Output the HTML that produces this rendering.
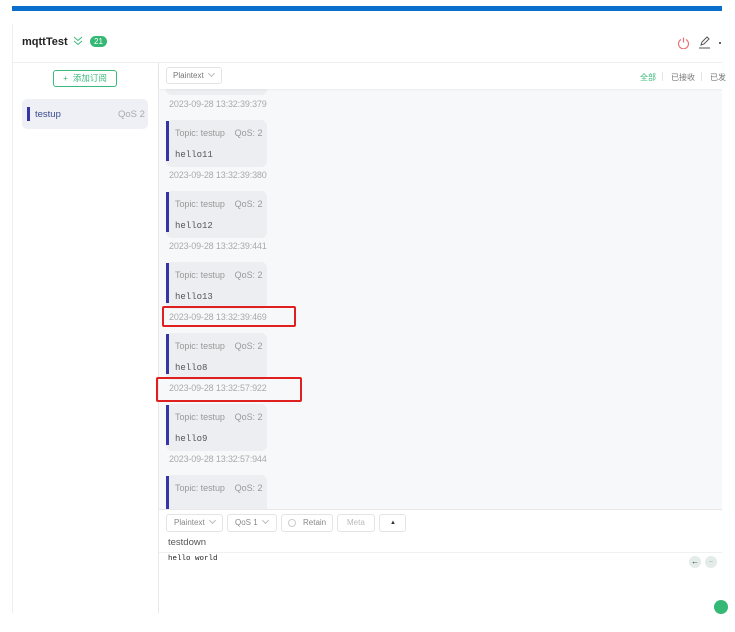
<!DOCTYPE html>
<html><head><meta charset="utf-8"><style>
*{margin:0;padding:0;box-sizing:border-box}
body{width:735px;height:632px;background:#fff;font-family:"Liberation Sans","Noto Sans CJK SC",sans-serif;position:relative;overflow:hidden}
.a{position:absolute}
.card{position:absolute;left:166px;width:101px;height:47px;background:#eceef2;border-radius:6px}
.card .bar{position:absolute;left:0;top:1px;width:3px;height:40px;background:#3535a8}
.card .t{position:absolute;left:9px;top:8px;font-size:9px;color:#999;white-space:nowrap;letter-spacing:-0.05px}
.card .m{position:absolute;left:9px;top:30px;font-size:9px;color:#555;font-family:"Liberation Mono",monospace}
.ts{position:absolute;left:169px;font-size:9px;color:#aaa;white-space:nowrap;letter-spacing:-0.15px}
.btn{position:absolute;top:514px;height:18px;border:1px solid #e4e4e4;border-radius:3px;font-size:8px;color:#888;line-height:16px;padding-left:7px;background:#fff;white-space:nowrap}
.red{position:absolute;border:2px solid #e02020;border-radius:2px}
.chev{display:inline-block;width:5px;height:5px;border-right:1px solid #bbb;border-bottom:1px solid #bbb;transform:rotate(45deg);margin-left:5px;position:relative;top:-2px}
</style></head><body>
<div class="a" style="left:12px;top:6px;width:710px;height:5px;background:#0a6fcc"></div>
<div class="a" style="left:12px;top:24px;width:710px;height:589px;border-left:1px solid #eee"></div>
<div class="a" style="left:22px;top:36px;font-size:11px;font-weight:bold;color:#222">mqttTest</div>
<svg class="a" style="left:73px;top:36px" width="10" height="10"><path d="M1 1l4 3.5 4-3.5M1 5l4 3.5 4-3.5" stroke="#3cb97d" fill="none" stroke-width="1"/></svg>
<div class="a" style="left:90px;top:36px;width:17px;height:11px;border-radius:6px;background:#34b875;color:#fff;font-size:8px;text-align:center;line-height:11px">21</div>
<svg class="a" style="left:677px;top:36px" width="13" height="13"><path d="M4 3.5A5 5 0 1 0 9 3.5M6.5 1.5v5" stroke="#e57373" fill="none" stroke-width="1.2"/></svg>
<svg class="a" style="left:698px;top:36px" width="13" height="13"><path d="M3 9l1-3 5-5 2 2-5 5z M1 12h11" stroke="#555" fill="none" stroke-width="1"/></svg>
<div class="a" style="left:719px;top:42px;width:2px;height:2px;background:#333;border-radius:1px"></div>
<div class="a" style="left:12px;top:62px;width:710px;height:1px;background:#eee"></div>
<div class="a" style="left:158px;top:63px;width:1px;height:550px;background:#e8e8e8"></div>
<div class="a" style="left:53px;top:70px;width:64px;height:17px;border:1px solid #3cb97d;border-radius:3px;font-size:8.5px;color:#3cb97d;text-align:center;line-height:15px">+&nbsp; 添加订阅</div>
<div class="a" style="left:22px;top:99px;width:126px;height:30px;background:#eef0f6;border-radius:5px"></div>
<div class="a" style="left:27px;top:107px;width:3px;height:14px;background:#3535a8"></div>
<div class="a" style="left:35px;top:109px;font-size:9.5px;color:#3a4a8a">testup</div>
<div class="a" style="left:118px;top:109px;font-size:9.5px;color:#aaa">QoS 2</div>
<div class="a" style="left:159px;top:63px;width:563px;height:446px;background:#f7f8fa"></div>
<div class="card" style="top:84px;height:11px"></div>
<div class="a" style="left:159px;top:63px;width:563px;height:26px;background:#fff;box-shadow:0 1px 2px rgba(0,0,0,.05)"></div>
<div class="a" style="left:166px;top:67px;width:56px;height:17px;border:1px solid #e4e4e4;border-radius:3px;font-size:8px;color:#777;line-height:15px;padding-left:6px;white-space:nowrap">Plaintext<span class="chev"></span></div>
<div class="a" style="left:640px;top:72px;font-size:8px;color:#3cb97d">全部</div>
<div class="a" style="left:662px;top:72px;width:1px;height:9px;background:#e4e4e4"></div>
<div class="a" style="left:671px;top:72px;font-size:8px;color:#777">已接收</div>
<div class="a" style="left:701px;top:72px;width:1px;height:9px;background:#e4e4e4"></div>
<div class="a" style="left:710px;top:72px;font-size:8px;color:#777">已发</div>
<div class="ts" style="top:99px">2023-09-28 13:32:39:379</div>
<div class="card" style="top:120px"><div class="bar"></div><div class="t">Topic: testup &nbsp;&nbsp; QoS: 2</div><div class="m">hello11</div></div>
<div class="ts" style="top:170px">2023-09-28 13:32:39:380</div>
<div class="card" style="top:191px"><div class="bar"></div><div class="t">Topic: testup &nbsp;&nbsp; QoS: 2</div><div class="m">hello12</div></div>
<div class="ts" style="top:241px">2023-09-28 13:32:39:441</div>
<div class="card" style="top:262px"><div class="bar"></div><div class="t">Topic: testup &nbsp;&nbsp; QoS: 2</div><div class="m">hello13</div></div>
<div class="ts" style="top:312px">2023-09-28 13:32:39:469</div>
<div class="card" style="top:333px"><div class="bar"></div><div class="t">Topic: testup &nbsp;&nbsp; QoS: 2</div><div class="m">hello8</div></div>
<div class="ts" style="top:383px">2023-09-28 13:32:57:922</div>
<div class="card" style="top:404px"><div class="bar"></div><div class="t">Topic: testup &nbsp;&nbsp; QoS: 2</div><div class="m">hello9</div></div>
<div class="ts" style="top:454px">2023-09-28 13:32:57:944</div>
<div class="card" style="top:475px;height:34px;border-radius:6px 6px 0 0"><div class="bar" style="height:33px"></div><div class="t">Topic: testup &nbsp;&nbsp; QoS: 2</div></div>
<div class="red" style="left:162px;top:306px;width:134px;height:21px"></div>
<div class="red" style="left:156px;top:377px;width:146px;height:25px"></div>
<div class="a" style="left:159px;top:509px;width:563px;height:1px;background:#e8e8e8"></div>
<div class="btn" style="left:166px;width:57px">Plaintext<span class="chev"></span></div>
<div class="btn" style="left:227px;width:50px">QoS 1<span class="chev"></span></div>
<div class="btn" style="left:281px;width:52px;padding-left:21px">Retain</div>
<div class="a" style="left:288px;top:519px;width:8px;height:8px;border:1px solid #ccc;border-radius:50%"></div>
<div class="btn" style="left:337px;width:38px;color:#bbb;padding-left:9px">Meta</div>
<div class="btn" style="left:379px;width:27px;padding-left:10px;font-size:6px;color:#333">▲</div>
<div class="a" style="left:168px;top:537px;font-size:9.5px;color:#555">testdown</div>
<div class="a" style="left:159px;top:552px;width:563px;height:1px;background:#f0f0f0"></div>
<div class="a" style="left:168px;top:555px;font-size:7.5px;color:#222;font-family:'Liberation Mono',monospace">hello world</div>
<div class="a" style="left:689px;top:556px;width:12px;height:12px;border-radius:50%;background:#e3ece8;font-size:8px;color:#333;text-align:center;line-height:12px">←</div>
<div class="a" style="left:705px;top:556px;width:12px;height:12px;border-radius:50%;background:#e3ece8;font-size:7px;color:#aaa;text-align:center;line-height:12px">–</div>
<div class="a" style="left:714px;top:600px;width:14px;height:14px;border-radius:50%;background:#34b875"></div>
</body></html>
